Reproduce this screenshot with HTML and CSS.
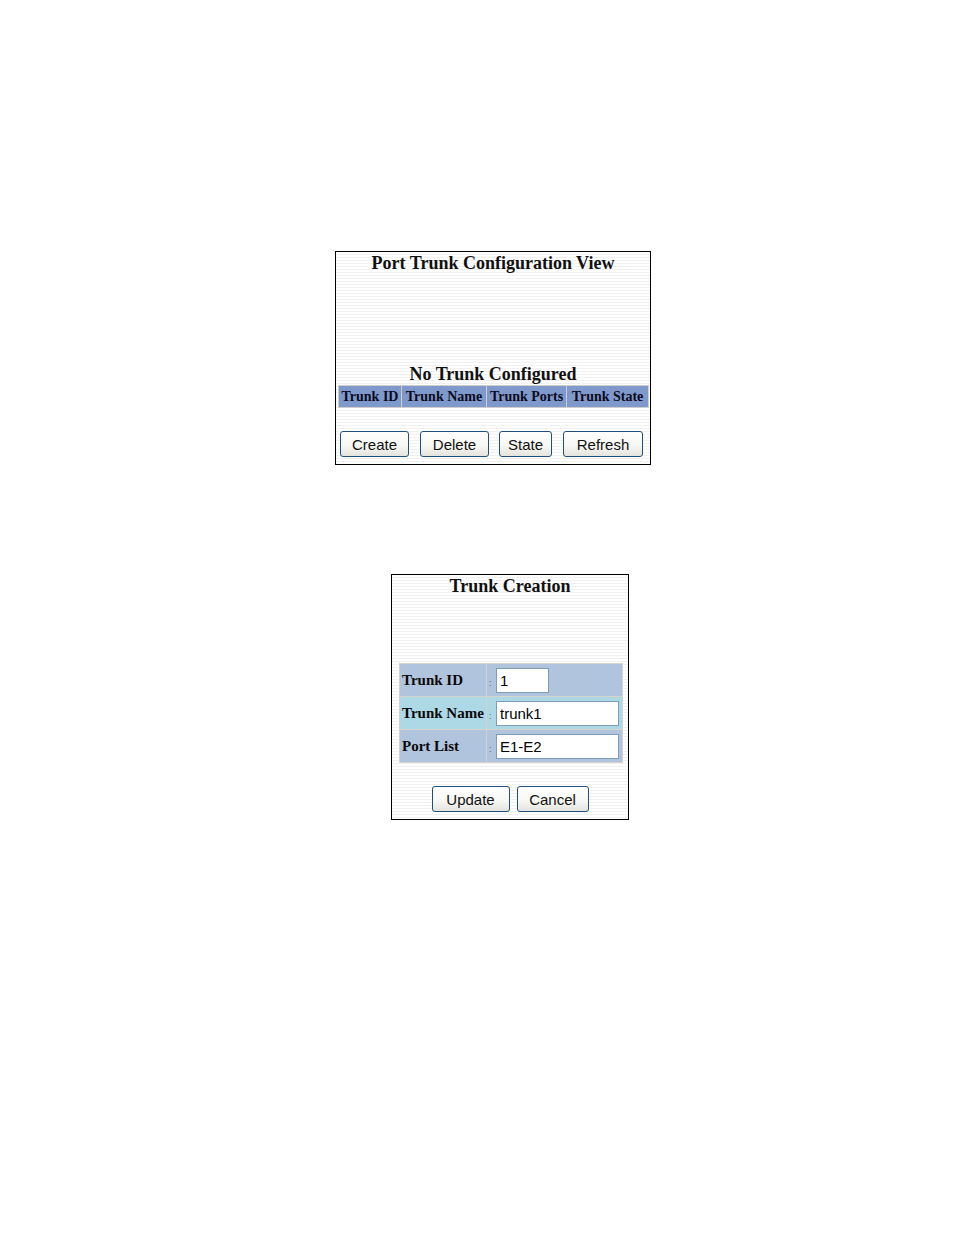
FILE: index.html
```html
<!DOCTYPE html>
<html>
<head>
<meta charset="utf-8">
<link rel="stylesheet" href="styles.css">
</head>
<body>
<div class="page">
  <div class="panel panel-view">
    <div class="title">Port Trunk Configuration View</div>
    <div class="subtitle">No Trunk Configured</div>
    <div class="head-grid">
      <div class="hcell">Trunk ID</div>
      <div class="hcell">Trunk Name</div>
      <div class="hcell">Trunk Ports</div>
      <div class="hcell">Trunk State</div>
    </div>
    <div class="btn-row btn-row-view">
      <button class="btn b-create">Create</button>
      <button class="btn b-delete">Delete</button>
      <button class="btn b-state">State</button>
      <button class="btn b-refresh">Refresh</button>
    </div>
  </div>

  <div class="panel panel-create">
    <div class="title">Trunk Creation</div>
    <div class="form-grid">
      <div class="lcell row-a">Trunk ID</div>
      <div class="vcell row-a"><span class="colon">:</span><input class="field field-short" value="1"></div>
      <div class="lcell row-b">Trunk Name</div>
      <div class="vcell row-b"><span class="colon">:</span><input class="field" value="trunk1"></div>
      <div class="lcell row-a">Port List</div>
      <div class="vcell row-a"><span class="colon">:</span><input class="field" value="E1-E2"></div>
    </div>
    <div class="btn-row btn-row-create">
      <button class="btn b-update">Update</button>
      <button class="btn b-cancel">Cancel</button>
    </div>
  </div>
</div>
</body>
</html>
```

FILE: styles.css
```css
html, body {
  margin: 0;
  padding: 0;
  background: #fff;
}
.page {
  padding: 251px 0 0 335px;
  display: flex;
  flex-direction: column;
  align-items: flex-start;
}
.panel {
  box-sizing: border-box;
  border: 1px solid #000;
  background: repeating-linear-gradient(to bottom, #ffffff 0px, #ffffff 2px, #f1f1f1 2px, #f1f1f1 3px);
  display: flex;
  flex-direction: column;
  font-family: "Liberation Serif", "Times New Roman", serif;
}
.panel-view {
  width: 316px;
  height: 214px;
}
.panel-create {
  width: 238px;
  height: 246px;
  margin-top: 109px;
  margin-left: 56px;
}
.title, .subtitle {
  font-weight: bold;
  font-size: 18px;
  line-height: 20px;
  text-align: center;
  color: #111;
}
.title {
  margin-top: 1px;
}
.subtitle {
  margin-top: 91px;
}
.head-grid {
  display: grid;
  grid-template-columns: 62px 84px 79px 81px;
  gap: 1px;
  padding: 1px;
  margin: 1px 0 0 2px;
  width: max-content;
  background: #d0cec8;
}
.hcell {
  background: #8099cc;
  height: 21px;
  line-height: 21px;
  font-weight: bold;
  font-size: 14px;
  color: #0a0a1a;
  text-align: center;
  white-space: nowrap;
}
.btn-row {
  display: flex;
}
.btn-row-view {
  margin: 23px 0 0 4px;
}
.btn-row-create {
  margin-top: 23px;
  justify-content: center;
  gap: 7px;
}
.btn {
  box-sizing: border-box;
  height: 26px;
  padding: 0;
  border: 1px solid #1f4f7f;
  border-radius: 3px;
  background: linear-gradient(to bottom, #ffffff 0%, #f6f6f2 60%, #e4e3dc 100%);
  font-family: "Liberation Sans", Arial, sans-serif;
  font-size: 15px;
  color: #111;
}
.b-create { width: 69px; }
.b-delete { width: 69px; margin-left: 11px; }
.b-state { width: 53px; margin-left: 10px; }
.b-refresh { width: 80px; margin-left: 11px; }
.b-update { width: 78px; }
.b-cancel { width: 72px; }

.form-grid {
  display: grid;
  grid-template-columns: 86px 135px;
  grid-auto-rows: 32px;
  gap: 1px;
  padding: 1px;
  margin: 67px 0 0 7px;
  width: max-content;
  background: #d6d3cb;
}
.lcell {
  font-weight: bold;
  font-size: 15px;
  color: #0a0a0a;
  display: flex;
  align-items: center;
  padding-left: 2px;
  white-space: nowrap;
}
.vcell {
  display: flex;
  align-items: center;
}
.row-a { background: #b0c4de; }
.row-b { background: #add8e6; }
.colon {
  font-family: "Liberation Sans", Arial, sans-serif;
  font-size: 9px;
  color: #666;
  width: 9px;
  padding-left: 2px;
  box-sizing: border-box;
  align-self: center;
  margin-top: 6px;
}
.field {
  box-sizing: border-box;
  width: 123px;
  height: 25px;
  border: 1px solid #7f9db9;
  padding: 0 3px;
  font-family: "Liberation Sans", Arial, sans-serif;
  font-size: 15px;
  color: #000;
  background: #fff;
  outline: none;
}
.field-short {
  width: 53px;
}
```
